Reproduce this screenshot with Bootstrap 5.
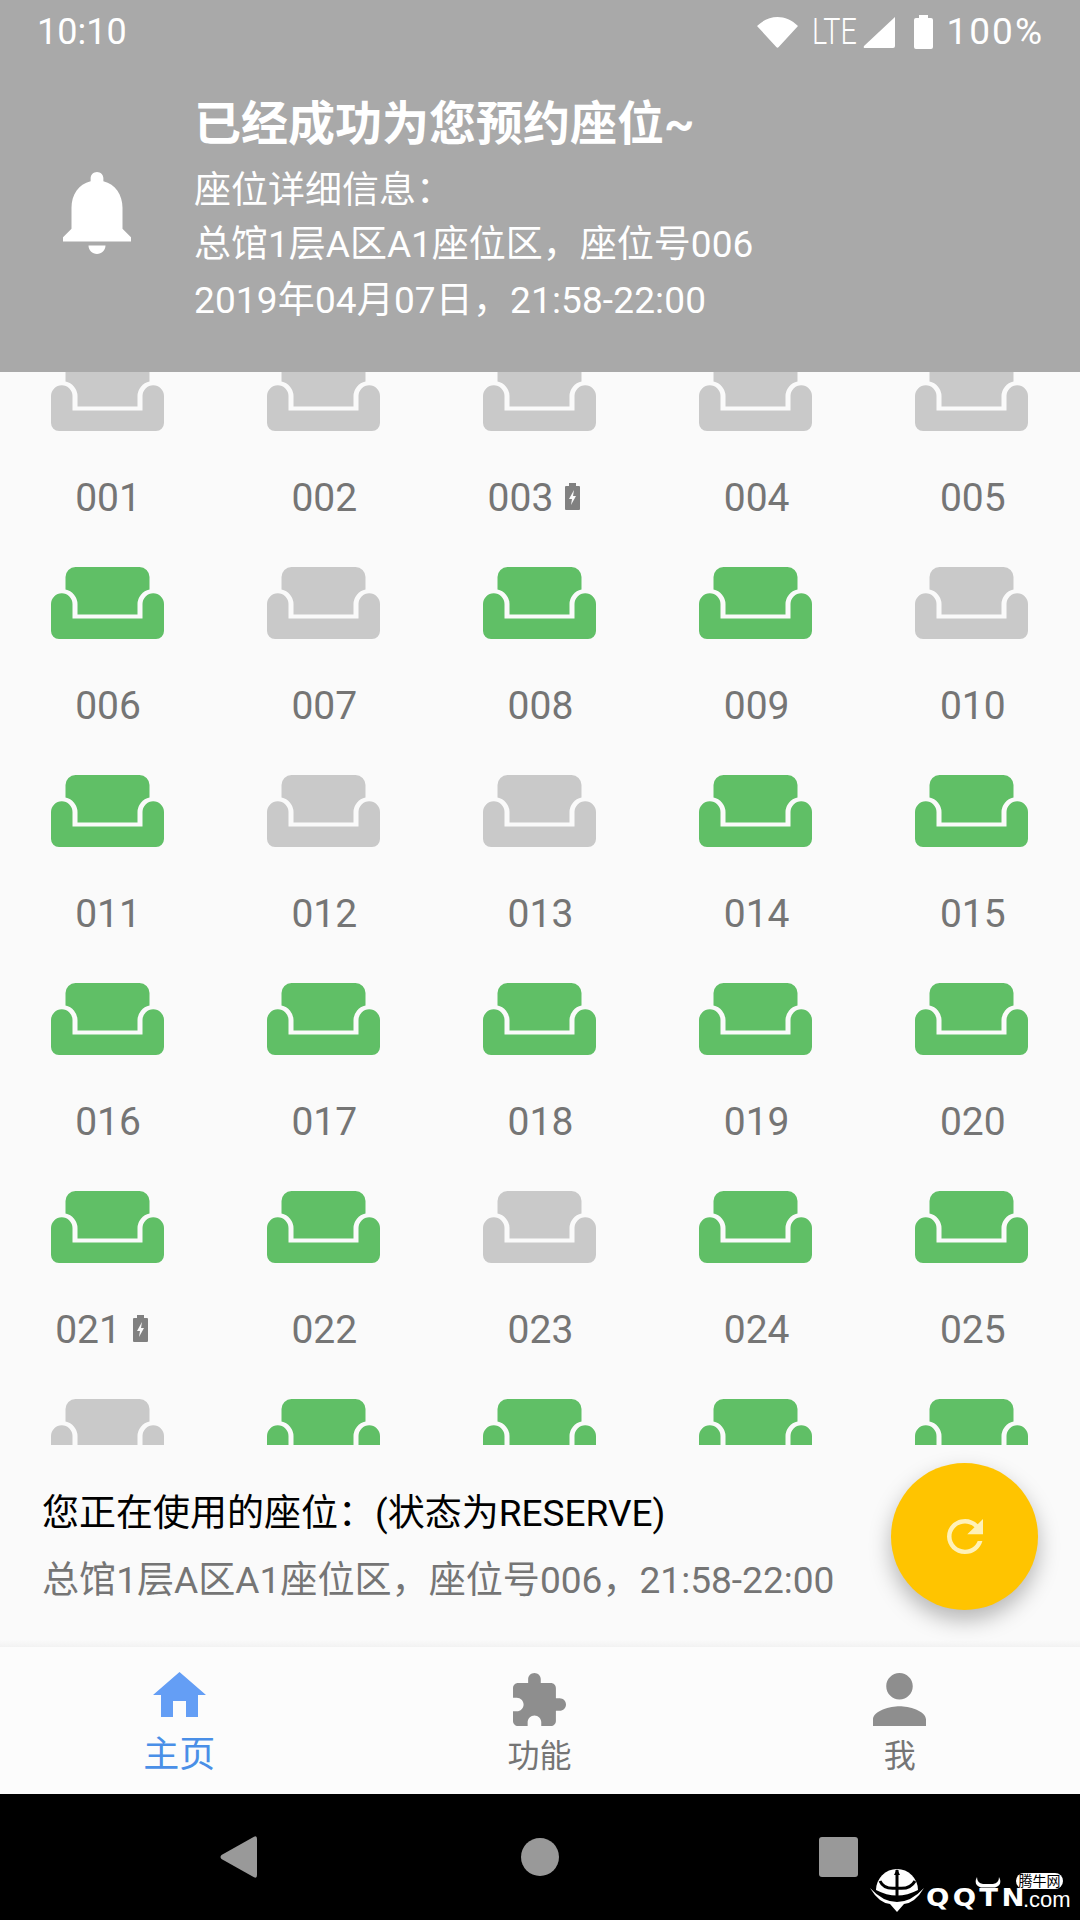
<!DOCTYPE html>
<html lang="zh-CN">
<head>
<meta charset="utf-8">
<title>座位</title>
<link href="https://cdn.jsdelivr.net/npm/bootstrap@5.3.0/dist/css/bootstrap.min.css" rel="stylesheet">
<style>
html,body{margin:0;background:#fafafa;}
body{font-family:Roboto,"Noto Sans CJK SC",sans-serif;}
.phone{width:1080px;height:1920px;overflow:hidden;position:relative;background:#fafafa;}
.hdr{height:372px;background:#a9a9a9;color:#fff;flex:none;}
.stat{height:60px;padding:4px 38px 0 37px;font-size:36px;line-height:56px;}
.stat-r{gap:14px;}
.lte{font-size:36px;font-weight:300;width:43px;margin-right:-6px;display:inline-block;transform:scaleX(.8);transform-origin:left center;white-space:nowrap;}
.batt{margin-left:5px;}
.pct{font-size:37px;letter-spacing:2px;margin-right:-2px;}
.note{padding-left:63px;padding-top:26px;}
.bell{width:68px;height:82px;margin-top:86px;margin-right:63px;flex:none;}
.ttl{font-size:47px;font-weight:700;line-height:75px;}
.ln{font-size:37px;line-height:56px;white-space:nowrap;}
.ln-top{padding-top:4px;line-height:52px;}
.ln-date{letter-spacing:.14px;}
.seats{height:1073px;flex:none;overflow:hidden;}
.seatgrid{margin-top:-13px;margin-left:-1px;}
.cell{height:208px;display:flex;flex-direction:column;align-items:center;}
.sofa{width:113px;height:72px;}
.sofa-on{fill:#60bf66;}
.sofa-off{fill:#c9c9c9;}
.num{font-size:39px;line-height:50px;margin-top:42px;margin-left:2px;color:#757575;display:flex;align-items:center;}
.chg{width:40px;height:27px;margin-top:-3px;}
.panel{height:195px;padding:35px 0 0 42px;flex:none;}
.p1{font-size:37px;line-height:68px;color:#000;}
.p2{font-size:37.1px;line-height:66px;color:#757575;}
.edge{height:7px;flex:none;background:linear-gradient(#fafafa,#f2f2f2);}
.tabs{height:147px;flex:none;background:#fcfcfc;margin-left:-1px;}
.tabcell{display:flex;flex-direction:column;align-items:center;padding-top:26px;color:#757575;}
.tabcell svg{width:53px;height:53px;fill:#8e8e8e;}
.tabcell span{font-size:32px;line-height:40px;margin-top:10px;}
.tabon{padding-top:25px;color:#4a8fe7;}
.tabon svg{height:45px;fill:#649ef5;}
.tabon span{font-size:36px;margin-top:18px;}
.sysnav{height:126px;flex:none;background:#000;}
.navcell{width:300px;}
.back{width:37px;height:42px;fill:#999;margin-top:42px;margin-right:4px;}
.homeb{width:38px;height:38px;background:#999;margin-top:44px;}
.recent{width:39px;height:40px;background:#999;border-radius:3px;margin-top:43px;margin-right:3px;}
.fab{left:891px;top:1463px;width:147px;height:147px;background:#ffc400;box-shadow:0 10px 22px rgba(0,0,0,.28);}
.fab svg{width:36px;height:35px;fill:#fff1b8;}
.mark-logo{left:870px;top:1866px;width:200px;height:46px;color:#fff;}
.helm{width:55px;height:46px;}
.qq{left:56px;top:18px;font-family:"DejaVu Sans",sans-serif;font-weight:700;font-size:25px;line-height:28px;letter-spacing:3px;transform:scaleX(1.1);transform-origin:left center;}
.com{left:153px;top:22px;font-family:"Liberation Sans",sans-serif;font-size:22px;line-height:24px;}
.bub{left:146px;top:7px;width:47px;height:16px;background:#fff;border-radius:8px;color:#000;font-size:14px;line-height:16px;text-align:center;white-space:nowrap;}
.horn{left:105px;top:11px;width:26px;height:12px;}
</style>
</head>
<body>
<svg width="0" height="0" class="position-absolute">
  <defs>
    <symbol id="sofa" viewBox="0 0 113 72">
      <path d="M24.500 0H88.500a10 10 0 0 1 10 10V22.500A15 15 0 0 0 86.500 37V47.500H26.500V37A15 15 0 0 0 14.500 22.500V10A10 10 0 0 1 24.500 0Z"/>
      <path d="M0 37a10.500 10.500 0 0 1 21.500 0V51.500H91.500V37a10.500 10.500 0 0 1 21.500 0V64a8 8 0 0 1-8 8H8a8 8 0 0 1-8-8Z"/>
    </symbol>
    <symbol id="chg" viewBox="0 0 40 27">
      <path fill="#808080" fill-rule="evenodd" transform="translate(-2 0)" d="M18 0h7v3h3a1 1 0 0 1 1 1v22a1 1 0 0 1-1 1H15a1 1 0 0 1-1-1V4a1 1 0 0 1 1-1h3ZM23 7l-5 9h3l-1 6 5-9h-3Z"/>
    </symbol>
  </defs>
</svg>

<div class="phone d-flex flex-column">
  <div class="hdr">
    <div class="stat d-flex justify-content-between align-items-center">
      <span>10:10</span>
      <div class="stat-r d-flex align-items-center">
        <svg width="41" height="31" viewBox="0 0 41 31" fill="#fff"><path d="M0 9C12-3 29-3 41 9L21.700 30a1.600 1.600 0 0 1-2.400 0Z"/></svg>
        <span class="lte">LTE</span>
        <svg width="32" height="31" viewBox="0 0 32 31" fill="#fff"><path d="M32 0V29a2 2 0 0 1-2 2H2Q0 31 1 29Z"/></svg>
        <svg class="batt" width="19" height="34" viewBox="0 0 19 34" fill="#fff"><path d="M5 0h9v3h3a2 2 0 0 1 2 2v27a2 2 0 0 1-2 2H2a2 2 0 0 1-2-2V5a2 2 0 0 1 2-2h3Z"/></svg>
        <span class="pct">100%</span>
      </div>
    </div>
    <div class="note d-flex align-items-start">
      <svg class="bell" viewBox="4 2.500 16 19.500" preserveAspectRatio="none" fill="#fff"><path d="M12 22c1.100 0 2-.9 2-2h-4c0 1.100.89 2 2 2zm6-6v-5c0-3.070-1.640-5.640-4.500-6.320V4c0-.83-.67-1.500-1.500-1.500s-1.500.67-1.500 1.500v.68C7.630 5.360 6 7.920 6 11v5l-2 2v1h16v-1l-2-2z"/></svg>
      <div>
        <div class="ttl">已经成功为您预约座位~</div>
        <div class="ln ln-top">座位详细信息：</div>
        <div class="ln">总馆1层A区A1座位区，座位号006</div>
        <div class="ln ln-date">2019年04月07日，21:58-22:00</div>
      </div>
    </div>
  </div>

  <div class="seats">
    <div class="seatgrid row row-cols-5 g-0">
      <div class="col cell"><svg class="sofa sofa-off"><use href="#sofa"/></svg><div class="num">001</div></div>
      <div class="col cell"><svg class="sofa sofa-off"><use href="#sofa"/></svg><div class="num">002</div></div>
      <div class="col cell"><svg class="sofa sofa-off"><use href="#sofa"/></svg><div class="num">003<svg class="chg"><use href="#chg"/></svg></div></div>
      <div class="col cell"><svg class="sofa sofa-off"><use href="#sofa"/></svg><div class="num">004</div></div>
      <div class="col cell"><svg class="sofa sofa-off"><use href="#sofa"/></svg><div class="num">005</div></div>
      <div class="col cell"><svg class="sofa sofa-on"><use href="#sofa"/></svg><div class="num">006</div></div>
      <div class="col cell"><svg class="sofa sofa-off"><use href="#sofa"/></svg><div class="num">007</div></div>
      <div class="col cell"><svg class="sofa sofa-on"><use href="#sofa"/></svg><div class="num">008</div></div>
      <div class="col cell"><svg class="sofa sofa-on"><use href="#sofa"/></svg><div class="num">009</div></div>
      <div class="col cell"><svg class="sofa sofa-off"><use href="#sofa"/></svg><div class="num">010</div></div>
      <div class="col cell"><svg class="sofa sofa-on"><use href="#sofa"/></svg><div class="num">011</div></div>
      <div class="col cell"><svg class="sofa sofa-off"><use href="#sofa"/></svg><div class="num">012</div></div>
      <div class="col cell"><svg class="sofa sofa-off"><use href="#sofa"/></svg><div class="num">013</div></div>
      <div class="col cell"><svg class="sofa sofa-on"><use href="#sofa"/></svg><div class="num">014</div></div>
      <div class="col cell"><svg class="sofa sofa-on"><use href="#sofa"/></svg><div class="num">015</div></div>
      <div class="col cell"><svg class="sofa sofa-on"><use href="#sofa"/></svg><div class="num">016</div></div>
      <div class="col cell"><svg class="sofa sofa-on"><use href="#sofa"/></svg><div class="num">017</div></div>
      <div class="col cell"><svg class="sofa sofa-on"><use href="#sofa"/></svg><div class="num">018</div></div>
      <div class="col cell"><svg class="sofa sofa-on"><use href="#sofa"/></svg><div class="num">019</div></div>
      <div class="col cell"><svg class="sofa sofa-on"><use href="#sofa"/></svg><div class="num">020</div></div>
      <div class="col cell"><svg class="sofa sofa-on"><use href="#sofa"/></svg><div class="num">021<svg class="chg"><use href="#chg"/></svg></div></div>
      <div class="col cell"><svg class="sofa sofa-on"><use href="#sofa"/></svg><div class="num">022</div></div>
      <div class="col cell"><svg class="sofa sofa-off"><use href="#sofa"/></svg><div class="num">023</div></div>
      <div class="col cell"><svg class="sofa sofa-on"><use href="#sofa"/></svg><div class="num">024</div></div>
      <div class="col cell"><svg class="sofa sofa-on"><use href="#sofa"/></svg><div class="num">025</div></div>
      <div class="col cell"><svg class="sofa sofa-off"><use href="#sofa"/></svg></div>
      <div class="col cell"><svg class="sofa sofa-on"><use href="#sofa"/></svg></div>
      <div class="col cell"><svg class="sofa sofa-on"><use href="#sofa"/></svg></div>
      <div class="col cell"><svg class="sofa sofa-on"><use href="#sofa"/></svg></div>
      <div class="col cell"><svg class="sofa sofa-on"><use href="#sofa"/></svg></div>
    </div>
  </div>

  <div class="panel">
    <div class="p1">您正在使用的座位：(状态为RESERVE)</div>
    <div class="p2">总馆1层A区A1座位区，座位号006，21:58-22:00</div>
  </div>
  <div class="edge"></div>

  <div class="tabs row g-0">
    <div class="col tabcell tabon">
      <svg viewBox="0 0 53 45"><path d="M26.500 0L53 23H45V45H33V29H20V45H8V23H0Z"/></svg>
      <span>主页</span>
    </div>
    <div class="col tabcell">
      <svg viewBox="2 1 21 21"><path d="M20.500 11H19V7c0-1.100-.9-2-2-2h-4V3.500C13 2.120 11.880 1 10.500 1S8 2.120 8 3.500V5H4c-1.100 0-1.990.9-1.990 2v3.800H3.500c1.490 0 2.700 1.210 2.700 2.700s-1.210 2.700-2.700 2.700H2V20c0 1.100.9 2 2 2h3.800v-1.500c0-1.490 1.210-2.700 2.700-2.700 1.490 0 2.700 1.210 2.700 2.700V22H17c1.100 0 2-.9 2-2v-4h1.500c1.380 0 2.500-1.120 2.500-2.500S21.880 11 20.500 11z"/></svg>
      <span>功能</span>
    </div>
    <div class="col tabcell">
      <svg viewBox="4 4 16 16"><path d="M12 12c2.210 0 4-1.790 4-4s-1.790-4-4-4-4 1.790-4 4 1.790 4 4 4zm0 2c-2.670 0-8 1.340-8 4v2h16v-2c0-2.660-5.330-4-8-4z"/></svg>
      <span>我</span>
    </div>
  </div>

  <div class="sysnav d-flex justify-content-center">
    <div class="navcell d-flex justify-content-center">
      <svg class="back" viewBox="0 0 37 42"><path d="M34 .8Q37-.8 37 3V39Q37 42.800 34 41.200L1.500 23Q-.5 21 1.500 19Z"/></svg>
    </div>
    <div class="navcell d-flex justify-content-center">
      <div class="homeb rounded-circle"></div>
    </div>
    <div class="navcell d-flex justify-content-center">
      <div class="recent"></div>
    </div>
  </div>

  <div class="fab position-absolute rounded-circle d-flex align-items-center justify-content-center">
    <svg viewBox="4 4 16 16" preserveAspectRatio="none"><path d="M17.650 6.350C16.200 4.900 14.210 4 12 4c-4.420 0-7.990 3.580-7.990 8s3.570 8 7.990 8c3.730 0 6.840-2.550 7.730-6h-2.080c-.82 2.330-3.040 4-5.650 4-3.310 0-6-2.690-6-6s2.690-6 6-6c1.660 0 3.140.69 4.220 1.780L13 11h7V4l-2.350 2.350z"/></svg>
  </div>

  <div class="mark-logo position-absolute">
    <svg class="helm position-absolute top-0 start-0" viewBox="0 0 55 46">
      <path fill="#fff" d="M6 24A21 21 0 1 1 48 24Q27 35 6 24Z"/>
      <path fill="#fff" d="M0 22Q9 37 20 38L27 46L34 38Q45 37 54 22Q41 36 27 36Q13 36 0 22Z"/>
      <path fill="none" stroke="#000" stroke-width="3" d="M27 4V32M10 15Q14 24 27 22Q40 24 45 15"/>
      <path fill="#000" d="M24 9L27 3L30 9Z"/>
    </svg>
    <div class="qq position-absolute">QQTN</div>
    <svg class="horn position-absolute" viewBox="0 0 26 12"><path fill="#fff" d="M2 0Q-2 8 6 10.500H20Q28 8 24 0Q24 6 18 7H8Q2 6 2 0Z"/></svg>
    <div class="com position-absolute">.com</div>
    <div class="bub position-absolute">腾牛网</div>
  </div>
</div>
<script src="https://cdn.jsdelivr.net/npm/bootstrap@5.3.0/dist/js/bootstrap.bundle.min.js"></script>
</body>
</html>
